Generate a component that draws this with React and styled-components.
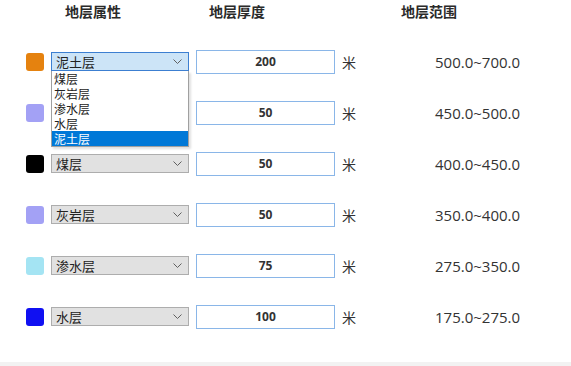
import React from 'react'
import styled, { createGlobalStyle } from 'styled-components'

const GlobalStyle = createGlobalStyle`
    body {
        margin: 0;
        background: #ffffff;
        font-family: "Open Sans", "Noto Sans CJK SC", sans-serif;
        color: #333333;
    }
`

const layers = [
    { color: '#e5820f', name: '泥土层', thickness: '200', range: '500.0~700.0', open: true },
    { color: '#a3a1f5', name: '灰岩层', thickness: '50', range: '450.0~500.0', hidden: true },
    { color: '#000000', name: '煤层', thickness: '50', range: '400.0~450.0' },
    { color: '#a3a1f5', name: '灰岩层', thickness: '50', range: '350.0~400.0' },
    { color: '#a4e4f3', name: '渗水层', thickness: '75', range: '275.0~350.0' },
    { color: '#1010f2', name: '水层', thickness: '100', range: '175.0~275.0' },
]

const options = ['煤层', '灰岩层', '渗水层', '水层', '泥土层']

const Chevron = () => (
    <svg width="9" height="5" viewBox="0 0 9 5">
        <polyline points="0.5,0.5 4.5,4.5 8.5,0.5" fill="none" stroke="#606060" strokeWidth="1" />
    </svg>
)

const App = () => {
    return (
        <Page>
            <GlobalStyle />
            <HeaderRow>
                <HeaderCell>地层属性</HeaderCell>
                <HeaderCell>地层厚度</HeaderCell>
                <HeaderCell>地层范围</HeaderCell>
            </HeaderRow>
            {layers.map((layer, i) => (
                <Row key={i}>
                    <Swatch color={layer.color} />
                    <SelectWrap>
                        <SelectBox active={layer.open}>
                            <span>{layer.hidden ? '' : layer.name}</span>
                            <Chevron />
                        </SelectBox>
                        {layer.open && (
                            <DropList>
                                {options.map((opt) => (
                                    <DropItem key={opt} selected={opt === layer.name}>{opt}</DropItem>
                                ))}
                            </DropList>
                        )}
                    </SelectWrap>
                    <ThicknessInput>{layer.thickness}</ThicknessInput>
                    <UnitLabel>米</UnitLabel>
                    <RangeText>{layer.range}</RangeText>
                </Row>
            ))}
            <Footer />
        </Page>
    )
}

const Page = styled.div`
    width: 571px;
    height: 366px;
    position: relative;
    display: flex;
    flex-direction: column;
`
const HeaderRow = styled.div`
    display: grid;
    grid-template-columns: 186px 102px 282px;
    height: 36px;
`
const HeaderCell = styled.div`
    text-align: center;
    font-family: "Noto Sans CJK SC", sans-serif;
    font-size: 14px;
    font-weight: bold;
    line-height: 22px;
    color: #2a2a2a;
`
const Row = styled.div`
    display: flex;
    align-items: center;
    height: 51px;
    padding-left: 26px;
`
const Swatch = styled.div`
    width: 18px;
    height: 18px;
    border-radius: 3px;
    background: ${(p) => p.color};
    margin-right: 7px;
`
const SelectWrap = styled.div`
    position: relative;
    width: 138px;
    margin-right: 7px;
`
const SelectBox = styled.div`
    box-sizing: border-box;
    height: 19px;
    display: flex;
    align-items: center;
    justify-content: space-between;
    padding: 0 6px 0 4px;
    border: 1px solid ${(p) => (p.active ? '#3c7fd1' : '#adadad')};
    background: ${(p) => (p.active ? '#cce4f7' : '#e1e1e1')};
    font-family: "Noto Sans CJK SC", sans-serif;
    font-size: 13px;
    color: #222222;
    line-height: 17px;
`
const DropList = styled.div`
    position: absolute;
    top: 19px;
    left: 0;
    width: 138px;
    box-sizing: border-box;
    background: #ffffff;
    border: 1px solid #a0a0a0;
    border-top: none;
    box-shadow: 2px 2px 2px rgba(0, 0, 0, 0.12);
    z-index: 2;
`
const DropItem = styled.div`
    height: 15px;
    line-height: 15px;
    overflow: hidden;
    padding-left: 2px;
    font-family: "Noto Sans CJK SC", sans-serif;
    font-size: 12px;
    color: ${(p) => (p.selected ? '#ffffff' : '#222222')};
    background: ${(p) => (p.selected ? '#0078d7' : 'transparent')};
`
const ThicknessInput = styled.div`
    box-sizing: border-box;
    width: 139px;
    height: 24px;
    border: 1px solid #8ab6e8;
    display: flex;
    align-items: center;
    justify-content: center;
    font-size: 12px;
    font-weight: bold;
    color: #333333;
    margin-right: 7px;
`
const UnitLabel = styled.div`
    width: 93px;
    font-family: "Noto Sans CJK SC", sans-serif;
    font-size: 14px;
    color: #333333;
`
const RangeText = styled.div`
    font-size: 15px;
    color: #333333;
`
const Footer = styled.div`
    margin-top: auto;
    height: 4px;
    background: #f2f2f2;
`

export default App
